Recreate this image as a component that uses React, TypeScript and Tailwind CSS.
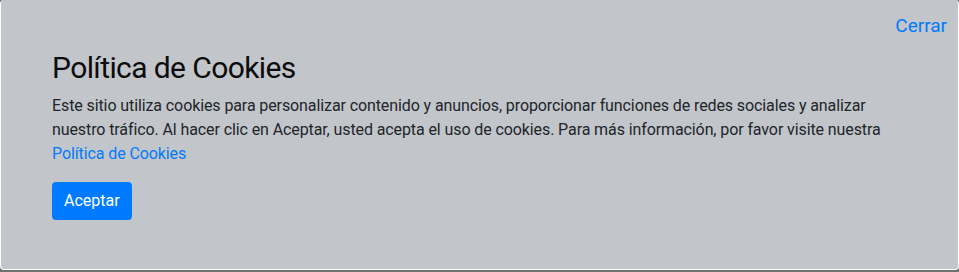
import React from "react";

export default function App() {
  return (
    <div className="w-[959px] h-[272px] bg-[#707070] font-['Roboto','Liberation_Sans',sans-serif] text-[#212529]">
      <div className="relative h-[270px] rounded-[4px] border border-t-0 border-white bg-[#c2c5c9] pl-[51px] pr-[40px] pt-[50px]">
        {/* close link sits over the panel corner */}
        <button className="absolute right-[11px] top-[12px] text-[19px] leading-[28px] text-[#007bff]">
          Cerrar
        </button>

        <h2 className="text-[30px] leading-[36px] font-normal tracking-[-0.6px] text-[#0c0c0c] mb-[8px]">
          Política de Cookies
        </h2>

        <p className="max-w-[880px] text-[16px] leading-[24px] tracking-[-0.1px] mb-[16px]">
          Este sitio utiliza cookies para personalizar contenido y anuncios, proporcionar funciones de redes
          sociales y analizar nuestro tráfico. Al hacer clic en Aceptar, usted acepta el uso de cookies. Para más
          información, por favor visite nuestra{" "}
          <a href="#" className="text-[#007bff]">
            Política de Cookies
          </a>
        </p>

        <button className="h-[38px] px-[12px] rounded-[4px] bg-[#007bff] text-white text-[16px] leading-[24px]">
          Aceptar
        </button>
      </div>
    </div>
  );
}
